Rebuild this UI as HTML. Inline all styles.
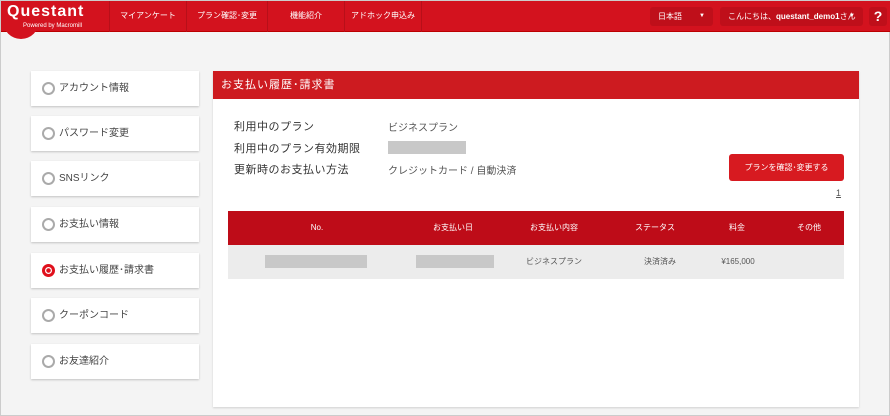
<!DOCTYPE html>
<html><head><meta charset="utf-8"><style>
*{margin:0;padding:0;box-sizing:border-box}
body{width:890px;height:416px;background:#f4f4f4;font-family:"Liberation Sans","Noto Sans CJK JP",sans-serif;position:relative;overflow:hidden;border:1px solid #ccc}
.hd{position:absolute;left:0;top:0;width:890px;height:31px;background:#d3121e;border-bottom:1px solid #b00}
.bub{position:absolute;left:2px;top:20px;width:36px;height:18px;background:#d3121e;border-radius:0 0 18px 18px}
.lt{position:absolute;left:6px;top:2px;color:#fff;font-size:16px;font-weight:bold;letter-spacing:1px}
.ls{position:absolute;left:22px;top:22px;color:#fff;font-size:6px;white-space:nowrap}
.nav{position:absolute;top:0;height:31px;color:#fff;font-size:8px;line-height:29px;text-align:center;border-left:1px solid #b80f19;white-space:nowrap}
.pill{position:absolute;top:6px;height:19px;background:#bf0f1a;border-radius:3px;color:#fff;font-size:8px;line-height:19px;padding-left:8px;white-space:nowrap;overflow:hidden}
.side{position:absolute;left:30px;width:168px;height:35px;background:#fff;box-shadow:0 1px 2px rgba(0,0,0,.2);font-size:10px;color:#444;line-height:35px;padding-left:28px}
.side:before{content:"";position:absolute;left:11px;top:11px;width:13px;height:13px;border:2.5px solid #aaa;border-radius:50%;box-sizing:border-box}
.side.on:before{border:3px solid #e0101c;background:radial-gradient(#e0101c 2px,#fff 2.5px)}
.main{position:absolute;left:212px;top:70px;width:646px;height:336px;background:#fff;box-shadow:0 1px 2px rgba(0,0,0,.15)}
.mh{height:28px;background:#cd1b20;color:#fff;font-size:11px;line-height:28px;padding-left:8px;letter-spacing:1px}
.lb{position:absolute;left:21px;font-size:11px;color:#333;letter-spacing:.5px}
.vl{position:absolute;left:175px;font-size:10px;color:#555}
.gb{background:#c8c8c8;position:absolute}
.btn{position:absolute;left:516px;top:83px;width:115px;height:27px;background:#d71a20;border-radius:3px;color:#fff;font-size:8px;text-align:center;line-height:27px}
.th{position:absolute;left:15px;top:140px;width:616px;height:34px;background:#be0c18;color:#fff;font-size:8px}
.tr{position:absolute;left:15px;top:174px;width:616px;height:34px;background:#ececec;color:#555;font-size:8px}
.th span,.tr span{position:absolute;top:0;line-height:34px;transform:translateX(-50%);white-space:nowrap}
</style></head><body>
<div class="hd">
<div class="bub"></div>
<div class="lt">Questant</div>
<div class="ls">Powered by Macromill</div>
<div class="nav" style="left:108px;width:77px">マイアンケート</div>
<div class="nav" style="left:185px;width:81px">プラン確認･変更</div>
<div class="nav" style="left:266px;width:77px">機能紹介</div>
<div class="nav" style="left:343px;width:78px;border-right:1px solid #b80f19">アドホック申込み</div>
<div class="pill" style="left:649px;width:63px">日本語<span style="position:absolute;right:8px;font-size:6px">▼</span></div>
<div class="pill" style="left:719px;width:143px">こんにちは、<b>questant_demo1</b>さん<span style="position:absolute;right:8px;font-size:6px">▼</span></div>
<div class="pill" style="left:868px;width:18px;padding:0;text-align:center;font-size:14px;font-weight:bold">?</div>
</div>
<div class="side" style="top:70px">アカウント情報</div>
<div class="side" style="top:115px">パスワード変更</div>
<div class="side" style="top:160px">SNSリンク</div>
<div class="side" style="top:206px">お支払い情報</div>
<div class="side on" style="top:252px">お支払い履歴･請求書</div>
<div class="side" style="top:297px">クーポンコード</div>
<div class="side" style="top:343px">お友達紹介</div>
<div class="main">
<div class="mh">お支払い履歴･請求書</div>
<div class="lb" style="top:47px">利用中のプラン</div><div class="vl" style="top:48px">ビジネスプラン</div>
<div class="lb" style="top:69px">利用中のプラン有効期限</div><div class="gb" style="left:175px;top:70px;width:78px;height:13px"></div>
<div class="lb" style="top:90px">更新時のお支払い方法</div><div class="vl" style="top:91px">クレジットカード / 自動決済</div>
<div class="btn">プランを確認･変更する</div>
<div style="position:absolute;left:623px;top:117px;font-size:9px;color:#555;text-decoration:underline">1</div>
<div class="th"><span style="left:89px">No.</span><span style="left:225px">お支払い日</span><span style="left:326px">お支払い内容</span><span style="left:427px">ステータス</span><span style="left:509px">料金</span><span style="left:581px">その他</span></div>
<div class="tr"><div class="gb" style="left:37px;top:10px;width:102px;height:13px"></div><div class="gb" style="left:188px;top:10px;width:78px;height:13px"></div><span style="left:326px">ビジネスプラン</span><span style="left:432px">決済済み</span><span style="left:510px">¥165,000</span></div>
</div>
</body></html>
